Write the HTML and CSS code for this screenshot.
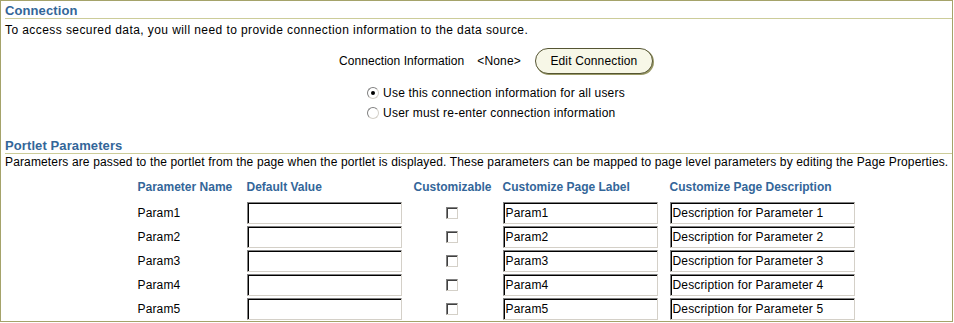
FILE: index.html
```html
<!DOCTYPE html>
<html lang="en">
<head>
    <meta charset="UTF-8">
    <title>Portlet Settings</title>
    <link rel="stylesheet" href="styles.css">
</head>
<body>
    <div class="frame">
        <div class="section-title">Connection</div>
        <div class="intro">To access secured data, you will need to provide connection information to the data source.</div>
        <div class="center conn-row">
            <span class="conn-label">Connection Information</span>
            <span class="conn-value">&lt;None&gt;</span>
            <span class="pill-button">Edit Connection</span>
        </div>
        <div class="center">
            <div class="radios">
                <div class="radio-row"><span class="radio checked"></span>Use this connection information for all users</div>
                <div class="radio-row"><span class="radio"></span>User must re-enter connection information</div>
            </div>
        </div>

        <div class="section-title second">Portlet Parameters</div>
        <div class="intro tight">Parameters are passed to the portlet from the page when the portlet is displayed. These parameters can be mapped to page level parameters by editing the Page Properties.</div>
        <div class="center">
            <div class="params">
                <div class="head">Parameter Name</div>
                <div class="head">Default Value</div>
                <div class="head">Customizable</div>
                <div class="head">Customize Page Label</div>
                <div class="head">Customize Page Description</div>

                <div class="cell">Param1</div>
                <div class="cell"><span class="field short"></span></div>
                <div class="cell"><span class="check"></span></div>
                <div class="cell"><span class="field short">Param1</span></div>
                <div class="cell"><span class="field long">Description for Parameter 1</span></div>

                <div class="cell">Param2</div>
                <div class="cell"><span class="field short"></span></div>
                <div class="cell"><span class="check"></span></div>
                <div class="cell"><span class="field short">Param2</span></div>
                <div class="cell"><span class="field long">Description for Parameter 2</span></div>

                <div class="cell">Param3</div>
                <div class="cell"><span class="field short"></span></div>
                <div class="cell"><span class="check"></span></div>
                <div class="cell"><span class="field short">Param3</span></div>
                <div class="cell"><span class="field long">Description for Parameter 3</span></div>

                <div class="cell">Param4</div>
                <div class="cell"><span class="field short"></span></div>
                <div class="cell"><span class="check"></span></div>
                <div class="cell"><span class="field short">Param4</span></div>
                <div class="cell"><span class="field long">Description for Parameter 4</span></div>

                <div class="cell">Param5</div>
                <div class="cell"><span class="field short"></span></div>
                <div class="cell"><span class="check"></span></div>
                <div class="cell"><span class="field short">Param5</span></div>
                <div class="cell"><span class="field long">Description for Parameter 5</span></div>
            </div>
        </div>
    </div>
</body>
</html>
```

FILE: styles.css
```css
body {
    margin: 0;
    font-family: "Liberation Sans", Arial, sans-serif;
    font-size: 12px;
    letter-spacing: 0.15px;
    color: #000;
    background: #fff;
}
.frame {
    box-sizing: border-box;
    width: 953px;
    height: 322px;
    border: 1px solid #a5a36a;
    overflow: hidden;
}
.section-title {
    margin-left: 4px;
    padding-top: 2px;
    height: 15px;
    line-height: 15px;
    font-size: 13px;
    font-weight: bold;
    letter-spacing: 0.1px;
    color: #336699;
    border-bottom: 1px solid #cccc99;
}
.section-title.second {
    margin-top: 13px;
}
.intro {
    margin: 4px 0 0 4px;
    line-height: 14px;
    white-space: nowrap;
    letter-spacing: 0.42px;
}
.intro.tight {
    margin-top: 1px;
    letter-spacing: 0.14px;
}
.center {
    display: flex;
    justify-content: center;
    padding-left: 39px;
}
.conn-row {
    margin-top: 11px;
    height: 26px;
    align-items: center;
}
.conn-label {
    letter-spacing: 0.05px;
}
.conn-value {
    margin-left: 13px;
}
.pill-button {
    box-sizing: border-box;
    margin-left: 14px;
    width: 118px;
    height: 26px;
    line-height: 24px;
    text-align: center;
    background: #f7f7e7;
    border: 1px solid #555533;
    border-radius: 13px;
    box-shadow: 1px 1px 0 #999966;
}
.radios {
    margin-top: 9px;
    letter-spacing: 0.2px;
}
.radio-row {
    display: flex;
    align-items: center;
    height: 20px;
}
.radio {
    box-sizing: border-box;
    width: 12px;
    height: 12px;
    margin-right: 4px;
    border: 1px solid #808080;
    border-right-color: #d4d0c8;
    border-bottom-color: #d4d0c8;
    border-radius: 50%;
    position: relative;
}
.radio.checked::after {
    content: "";
    position: absolute;
    left: 3px;
    top: 3px;
    width: 4px;
    height: 4px;
    border-radius: 50%;
    background: #000;
}
.params {
    display: grid;
    grid-template-columns: 109px 167px 89px 167px 185px;
    grid-auto-rows: 24px;
    margin-top: 8px;
}
.params .head {
    height: 20px;
    line-height: 20px;
    font-weight: bold;
    letter-spacing: 0;
    color: #336699;
    white-space: nowrap;
    margin-bottom: 4px;
}
.cell {
    display: flex;
    align-items: center;
    white-space: nowrap;
}
.field {
    box-sizing: border-box;
    height: 22px;
    line-height: 20px;
    padding-left: 2px;
    border: 1px solid #808080;
    border-right-color: #d4d0c8;
    border-bottom-color: #d4d0c8;
    box-shadow: inset 1px 1px 0 #000;
}
.field.short {
    width: 155px;
}
.field.long {
    width: 185px;
}
.check {
    box-sizing: border-box;
    margin-left: 32px;
    width: 12px;
    height: 12px;
    border: 1px solid #808080;
    border-right-color: #d4d0c8;
    border-bottom-color: #d4d0c8;
    box-shadow: inset 1px 1px 0 #404040;
}
```
